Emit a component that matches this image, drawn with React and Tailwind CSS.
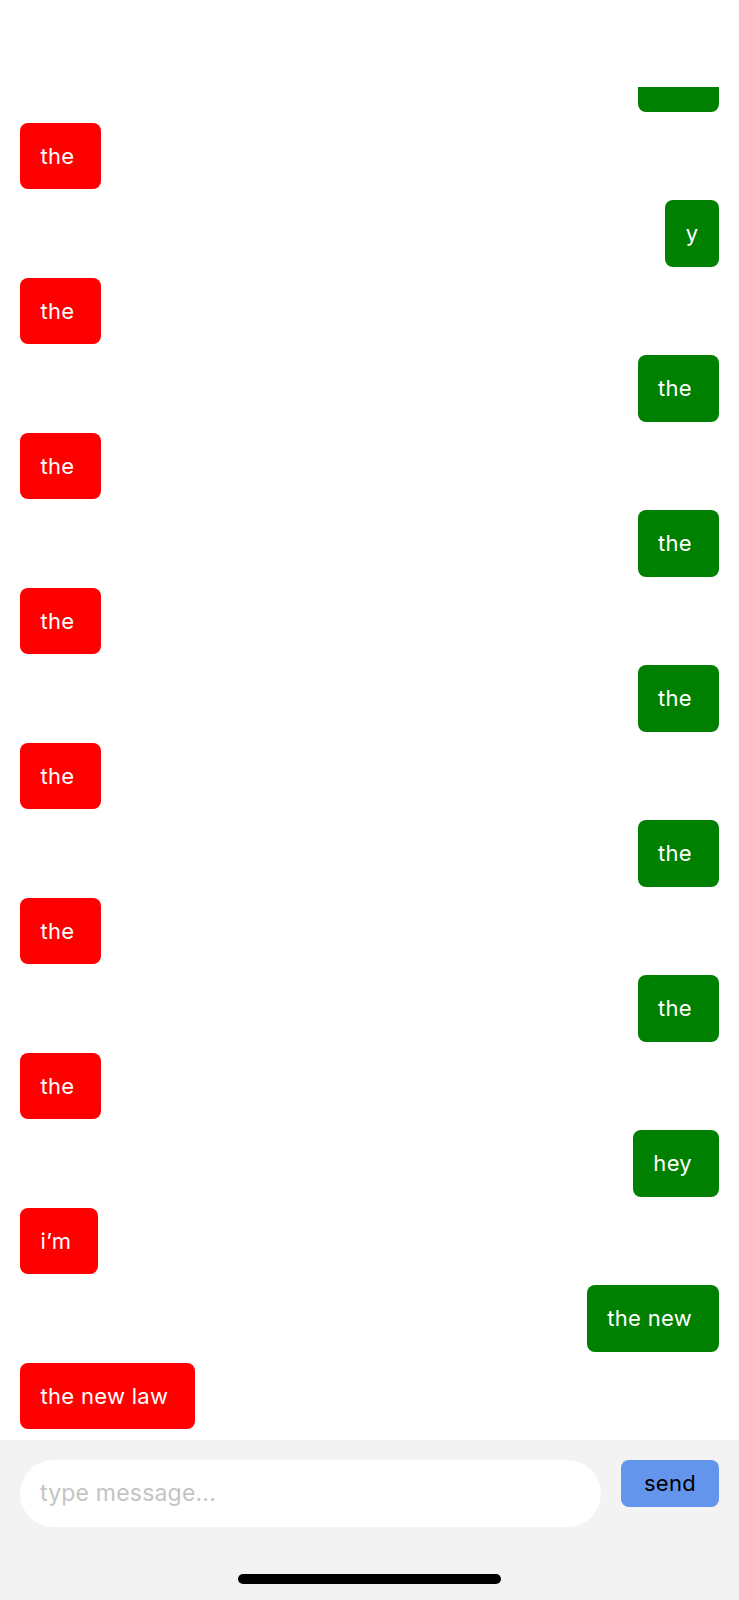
const MESSAGES = [
  { text: "the", mine: true },
  { text: "the", mine: false },
  { text: "y", mine: true },
  { text: "the", mine: false },
  { text: "the", mine: true },
  { text: "the", mine: false },
  { text: "the", mine: true },
  { text: "the", mine: false },
  { text: "the", mine: true },
  { text: "the", mine: false },
  { text: "the", mine: true },
  { text: "the", mine: false },
  { text: "the", mine: true },
  { text: "the", mine: false },
  { text: "hey", mine: true },
  { text: "i’m", mine: false },
  { text: "the new", mine: true },
  { text: "the new law", mine: false },
];

function Bubble({ text, mine }) {
  return (
    <div className={`flex ${mine ? "justify-end" : "justify-start"}`}>
      <div
        className={`flex h-[66.5px] shrink-0 items-center rounded-[8px] pl-[20.5px] ${
          text === "y" ? "pr-[20.5px]" : "pr-[27px]"
        } text-[22px] leading-none tracking-[0.3px] text-white ${mine ? "bg-[#008000]" : "bg-[#ff0000]"}`}
      >
        {text}
      </div>
    </div>
  );
}

export default function App() {
  return (
    <div
      className="flex h-[1600px] w-full flex-col bg-white"
      style={{ fontFamily: "Inter, 'Noto Sans', sans-serif" }}
    >
      <div className="h-[87px] shrink-0 bg-white" />

      <div className="flex min-h-0 flex-1 flex-col justify-end gap-[11px] overflow-hidden px-[20px] pb-[11px]">
        {MESSAGES.map((m, i) => (
          <Bubble key={i} text={m.text} mine={m.mine} />
        ))}
      </div>

      <div className="flex h-[160px] shrink-0 flex-col bg-[#f3f3f3] px-[20px] pt-[19.5px]">
        <div className="flex items-start gap-[20px]">
          <input
            placeholder="type message..."
            className="h-[67px] min-w-0 flex-1 rounded-full bg-white px-[20px] text-[23px] tracking-[0.2px] text-black outline-none placeholder:text-[#c4c4c4]"
          />
          <button className="h-[47px] w-[98px] rounded-[8px] bg-[#6495ed] text-[22px] tracking-[0.3px] text-black">
            send
          </button>
        </div>
        <div className="mt-auto mb-[16px] flex justify-center">
          <div className="h-[10px] w-[263px] rounded-full bg-black" />
        </div>
      </div>
    </div>
  );
}
